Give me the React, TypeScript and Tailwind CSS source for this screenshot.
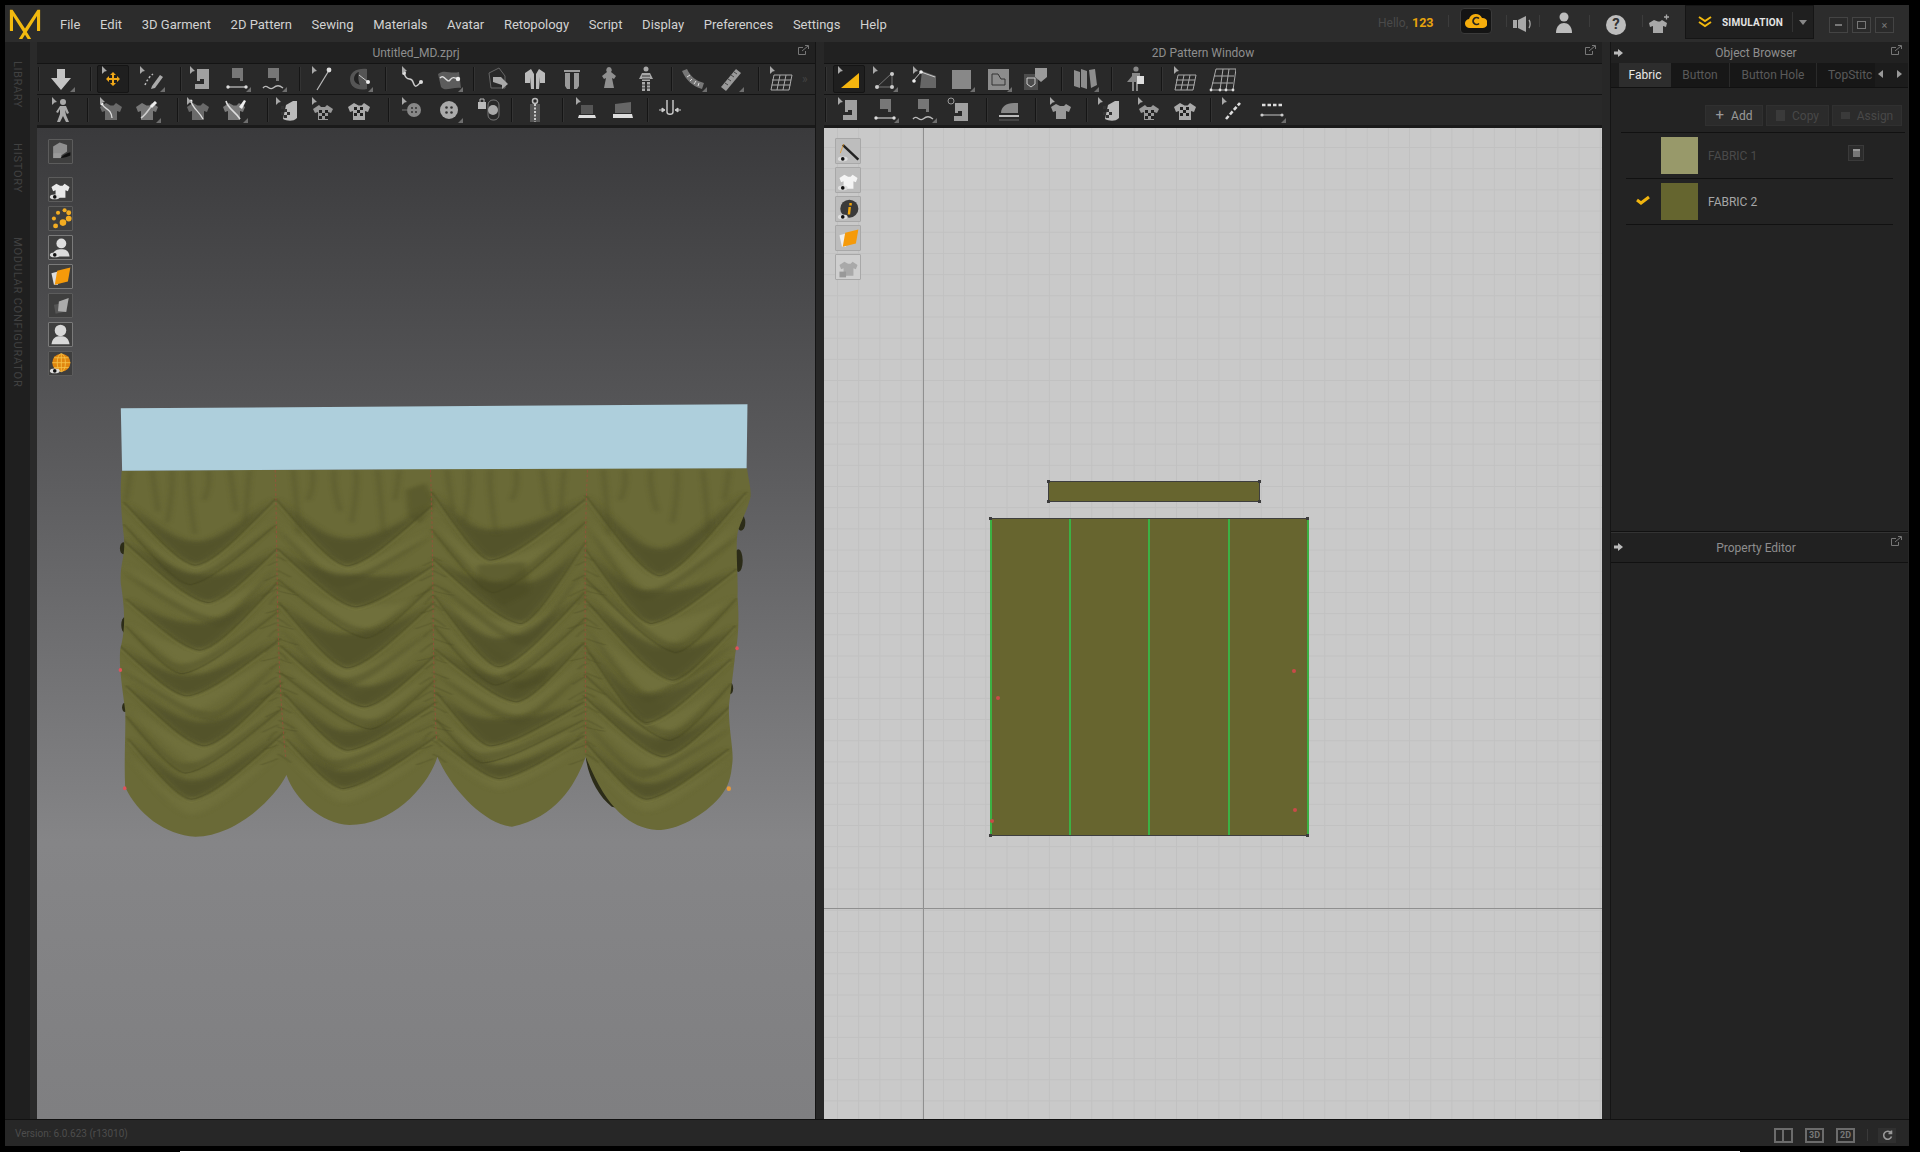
import React from "react";

const SHIRT = "M9 7 3 11l2 5 3-1v9h12v-9l3 1 2-5-6-4-2.5 2.5h-3z";
const Cur = () => <path d="M3 1v8l2.6-2.4L8 6z" fill="#a8a8a8" />;
const Tick = () => <path d="M28 27h-5l5-5z" fill="#6e6e6e" />;
const Chk = ({ x = 11, y = 14 }: { x?: number; y?: number }) => (
  <g fill="#222">
    <path d={`M${x} ${y}h3v3h-3zM${x + 6} ${y}h3v3h-3zM${x + 3} ${y + 3}h3v3h-3zM${x} ${y + 6}h3v3h-3zM${x + 6} ${y + 6}h3v3h-3z`} />
  </g>
);
const draw: Record<string, React.ReactNode> = {
  down: <path d="M10 4h8v9h6L14 25 4 13h6z" fill="#c4c4c4" />,
  move: (
    <path d="M14 7l3 3h-2v3h3v-2l3 3-3 3v-2h-3v3h2l-3 3-3-3h2v-3h-3v2l-3-3 3-3v2h3v-3h-2z" fill="#f0a818" />
  ),
  edit: <g><path d="M8 20c2-5 5-9 8-11" stroke="#bbb" strokeDasharray="2 2" fill="none" strokeWidth="1.5" /><path d="M15 21l8-11 3 2-8 11-4 1z" fill="#aaa" /></g>,
  sew: <path d="M10 4h12v20H8v-5h9v-5h-4v2h-3z" fill="#a0a0a0" />,
  sew2: <g><path d="M9 3h11v13h-3v-3H9z" fill="#777" /><path d="M5 22h18" stroke="#bbb" strokeWidth="1.3" /><circle cx="5" cy="22" r="1.7" fill="#ddd" /><circle cx="23" cy="22" r="1.7" fill="#ddd" /></g>,
  sew3: <g><path d="M9 3h11v13h-3v-3H9z" fill="#777" /><path d="M4 23c4-5 6 3 10 0s6-3 10 0" stroke="#bbb" strokeWidth="1.4" fill="none" /></g>,
  sew4: <g><circle cx="6" cy="5" r="3" fill="none" stroke="#999" /><path d="M10 7h13v18H9v-5h8v-5h-4v2h-3z" fill="#a0a0a0" /></g>,
  needle: <g><path d="M8 25 19 7" stroke="#bbb" strokeWidth="1.2" /><circle cx="20" cy="5" r="2.4" fill="#ddd" /></g>,
  ball: <g><path d="M5 14C5 7 12 3 22 4v20C12 26 5 22 5 14z" fill="#555" /><path d="M9 14c0-4 3-7 5-7-1 3-1 9 1 13-3-1-6-3-6-6z" fill="#222" /><path d="M14 10l9 7" stroke="#ccc" /><circle cx="23" cy="17" r="2" fill="#eee" /></g>,
  curve: <g><path d="M5 8c3 10 7 3 9 9s3 5 8 0" stroke="#ccc" strokeWidth="1.5" fill="none" /><circle cx="5" cy="8" r="2" fill="#ddd" /><circle cx="22" cy="17" r="2" fill="#ddd" /></g>,
  curve2: <g><path d="M3 9c6-5 12 0 21-2l2 16C17 22 10 27 6 22z" fill="#5c5c5c" /><path d="M5 13c4-5 7 6 10 2s5-2 8-1" stroke="#ddd" fill="none" strokeWidth="1.4" /><circle cx="23" cy="14" r="2.2" fill="#eee" /></g>,
  box: <g><path d="M5 8l10-5 6 8v12H7z" fill="none" stroke="#666" /><path d="M9 12h8l7 7-6 5v-4l-9-3z" fill="#aaa" /></g>,
  jacket: <path d="M10 4 4 8v10h5v-6l1 12h3V9zM18 4l6 4v10h-5v-6l-1 12h-3V9z" fill="#bbb" />,
  vest: <path d="M7 8h5v16H9l-2-3zM16 8h5v13l-2 3h-3zM6 5h16v2H6z" fill="#9a9a9a" />,
  dress: <path d="M14 2a3 3 0 0 1 2 5l5 4-2 3-2-1 2 10H9l2-10-2 1-2-3 5-4a3 3 0 0 1 2-5z" fill="#8f8f8f" />,
  armor: <g fill="#a8a8a8"><circle cx="14" cy="4" r="2.5" /><path d="M10 8h8l3 6h-3v2h-8v-2H7zM10 17h3v9h-3zM15 17h3v9h-3z" /><path d="M10 11h8M10 14h8M10 20h8M10 23h8" stroke="#333" /></g>,
  measure: <g><path d="M3 6c4 9 10 15 20 18l2-6C17 16 11 11 8 4z" fill="#777" /><path d="M8 12l3-2M11 16l2-2M15 19l2-3M19 21l1-3" stroke="#ddd" /></g>,
  ruler: <g><path d="M5 22 20 4l5 4-15 18z" fill="#999" /><path d="M9 18l3 2M12 14l3 2M15 10l3 2M18 7l3 2" stroke="#444" /></g>,
  grid: <g stroke="#aaa" fill="none"><path d="M7 10h18l-3 15H4zM13 10l-3 15M19 10l-3 15M5 15h19M4.6 20h18.8" /></g>,
  walk: <path d="M14 3a3 3 0 1 1 0 6 3 3 0 0 1 0-6zM11 10h6l3 7-2 1-2-4 1 5 3 7h-3l-3-6-3 6H8l3-8v-5l-2 4-2-1z" fill="#aaa" />,
  sc1: <g><path d={SHIRT} fill="#6a6a6a" /><path d="M5 8c3 6 9 4 10 14" stroke="#ddd" fill="none" strokeWidth="1.3" /><circle cx="5" cy="8" r="1.5" fill="#eee" /></g>,
  sc2: <g><path d={SHIRT} fill="#777" /><path d="M8 22C14 18 16 12 22 6" stroke="#ccc" fill="none" strokeWidth="1.6" /><path d="M17 10l5-5 2 2-5 5z" fill="#eee" /></g>,
  sc3: <g><path d={SHIRT} fill="#6a6a6a" /><path d="M7 5c2 8 8 10 12 18" stroke="#ddd" fill="none" strokeWidth="1.3" /><circle cx="7" cy="5" r="1.5" fill="#eee" /></g>,
  sc4: <g><path d={SHIRT} fill="#7b7b7b" /><path d="M6 5c2 8 9 10 14 18" stroke="#ddd" fill="none" strokeWidth="1.6" /><path d="M19 11l5-7 2 1-4 8z" fill="#eee" /></g>,
  stretch: <g><path d="M20 5h4v17c-4 4-10 3-14 1l3-14z" fill="#bbb" /><path d="M8 10h3v3H8zM11 13h3v3h-3zM8 16h3v3H8zM11 19h3v3h-3zM14 16h3v3h-3z" fill="#333" /></g>,
  chk: <g><path d="M10 9 4 13l2 4 3-1v8h10v-8l3 1 2-4-6-4-2 2h-4z" fill="#999" /><Chk x={10} y={14} /></g>,
  chk2: <g><path d={SHIRT} fill="#aaa" /><Chk x={9} y={11} /></g>,
  sh: <path d="M9 8 4 11l2 5 3-1v8h10v-8l3 1 2-5-5-3-2 2h-4z" fill="#999" />,
  b1: <g><path d="M3 14h5" stroke="#777" /><circle cx="15" cy="14" r="7" fill="#888" /><circle cx="13" cy="12" r="1" fill="#333" /><circle cx="17" cy="12" r="1" fill="#333" /><circle cx="13" cy="16" r="1" fill="#333" /><circle cx="17" cy="16" r="1" fill="#333" /></g>,
  b2: <g><circle cx="14" cy="14" r="9" fill="#aaa" /><circle cx="11.5" cy="11.5" r="1.3" fill="#333" /><circle cx="16.5" cy="11.5" r="1.3" fill="#333" /><circle cx="11.5" cy="16.5" r="1.3" fill="#333" /><circle cx="16.5" cy="16.5" r="1.3" fill="#333" /></g>,
  b3: <g><path d="M3 6h8v7H3z" fill="#bbb" /><path d="M5 6V3h4v3" stroke="#bbb" fill="none" /><rect x="13" y="4" width="11" height="20" rx="5" fill="none" stroke="#777" /><circle cx="18" cy="14" r="5" fill="#aaa" /></g>,
  zip: <g><path d="M9 8h10v18H9z" fill="#555" /><path d="M14 8v18" stroke="#ccc" strokeWidth="2" strokeDasharray="2 1.5" /><circle cx="14" cy="5" r="2.5" fill="none" stroke="#bbb" strokeWidth="1.5" /></g>,
  bind: <g><path d="M8 9h12v9H8z" fill="#555" /><path d="M6 19h16l1 3H5z" fill="#ddd" /></g>,
  bind2: <g><path d="M6 8l16-2v11H6z" fill="#666" /><path d="M4 18h19l1 4H4z" fill="#ddd" /></g>,
  pinch: <g stroke="#ccc" fill="#ccc"><path d="M11 4v12c0 3 6 3 6 0V4" fill="none" strokeWidth="1.4" /><path d="M3 14h5M25 14h-5" /><path d="M9 14l-3-2v4zM19 14l3-2v4z" /></g>,
  tri: <path d="M6 23 24 8v15z" fill="#f5b50f" />,
  line: <g><path d="M7 22h15V8z" fill="none" stroke="#777" /><circle cx="7" cy="22" r="2" fill="#ccc" /><circle cx="22" cy="22" r="2" fill="#ccc" /><circle cx="22" cy="9" r="2" fill="#ccc" /></g>,
  poly: <g><path d="M12 6l14 5v12H10z" fill="#666" /><path d="M3 16l8-9 14 5" stroke="#ccc" fill="none" /><circle cx="11" cy="7" r="1.8" fill="#eee" /><circle cx="4" cy="16" r="1.8" fill="#eee" /></g>,
  rect: <rect x="5" y="5" width="19" height="19" fill="#888" />,
  rect2: <g><rect x="4" y="4" width="21" height="21" fill="#8c8c8c" /><path d="M8 20V9h6l3 5h4v6z" fill="none" stroke="#333" /></g>,
  dart: <g><rect x="3" y="9" width="14" height="16" fill="#4d4d4d" /><path d="M6 13h8v6l-4 3-4-3z" fill="none" stroke="#ccc" /><path d="M14 3h12v9l-6 5-6-5z" fill="#9a9a9a" /></g>,
  fold: <path d="M3 5l6 2v16l-6-2zM10 4l6 2v18l-6-2zM18 5l6-1 2 16-6 3z" fill="#8d8d8d" />,
  avatar: <g><circle cx="13" cy="4" r="2.6" fill="#888" /><path d="M9 8h8v9h-2v9h-2v-9h-2v9H9v-9H4l5-6z" fill="#888" /><path d="M14 11h7v8h-7z" fill="#ddd" /></g>,
  grid2: <g stroke="#aaa" fill="none"><path d="M8 4h20l-3 21H3zM15 4l-3 21M21 4l-3 21M6 11h20M4 18h21" /><g fill="#ddd" stroke="none"><circle cx="3" cy="25" r="1.4" /><circle cx="12" cy="25" r="1.4" /><circle cx="18" cy="25" r="1.4" /><circle cx="25" cy="25" r="1.4" /></g></g>,
  iron: <g><path d="M5 17c0-6 5-10 13-10h4v10z" fill="#888" /><path d="M3 19h20v2H3z" fill="#bbb" /><path d="M3 23h20v2H3z" fill="#444" /></g>,
  seg: <path d="M7 23 21 7" stroke="#ddd" strokeWidth="2.6" strokeDasharray="4 2" />,
  dash: <g><path d="M4 9h20" stroke="#ddd" strokeWidth="2.4" strokeDasharray="3.5 2" /><path d="M4 19h20" stroke="#999" strokeWidth="1.4" /><circle cx="4" cy="19" r="1.6" fill="#ccc" /><circle cx="24" cy="19" r="1.6" fill="#ccc" /></g>,
};

const B = ({ k, c, t, cls }: { k: string; c?: boolean; t?: boolean; cls?: string }) => (
  <div className={`w-[36px] h-[28px] shrink-0 flex items-center justify-center ${cls ?? ""}`}>
    <svg width="28" height="28" viewBox="0 0 28 28">
      {draw[k]}
      {c && <Cur />}
      {t && <Tick />}
    </svg>
  </div>
);
const Sep = ({ cls }: { cls: string }) => <div className={`w-[2px] h-[24px] shrink-0 border-l border-[#151515] bg-[#333] ${cls}`} />;
const Act = ({ children }: { children: React.ReactNode }) => (
  <div className="w-[32px] h-[28px] shrink-0 flex items-center justify-center bg-[#1f1f1f] border border-[#151515] rounded-[2px]">{children}</div>
);

const Row = ({ children }: { children: React.ReactNode }) => (
  <div className="h-[31px] flex items-center bg-[#292929] border-t border-[#141414]">{children}</div>
);

const Title = ({ text, cls }: { text: string; cls: string }) => (
  <div className={`h-[21px] relative flex items-center justify-center bg-[#212121] text-[#8e8e8e] text-[12px] pt-[1px] ${cls}`}>
    {text}
    <Ext />
  </div>
);
const Ext = () => (
  <svg className="absolute right-[6px] top-[3px]" width="11" height="10" viewBox="0 0 11 10" fill="none" stroke="#777">
    <path d="M5 2.5H.5v7h7V6" />
    <path d="M4 6l6-5M7 .5h3.500V4" />
  </svg>
);
const Arrow = ({ cls }: { cls: string }) => (
  <svg className={`absolute left-[3px] ${cls}`} width="9" height="8" viewBox="0 0 9 8" fill="#bbb"><path d="M0 2.500h4V0l5 4-5 4V5.500H0z" /></svg>
);

const Tool3D = ({ children, on }: { children: React.ReactNode; on?: boolean }) => (
  <div className={`w-[25px] h-[25px] shrink-0 flex items-center justify-center rounded-[1px] border ${on ? "border-[#7a7a7a] bg-[#3f3f3f]" : "border-[#5c5c5c] bg-[#3e3e3e]"}`}>
    <svg width="23" height="23" viewBox="0 0 28 28">{children}</svg>
  </div>
);
const Eye = () => <g><ellipse cx="7" cy="23" rx="6" ry="3" fill="#ddd" /><circle cx="7" cy="23" r="2.2" fill="#111" /></g>;
const Tool2D = ({ children, dim }: { children: React.ReactNode; dim?: boolean }) => (
  <div className={`w-[26px] h-[26px] shrink-0 flex items-center justify-center rounded-[1px] border border-[#a8a8a8] ${dim ? "bg-[#cfcfcf]" : "bg-[#bdbdbd]"}`}>
    <svg width="23" height="23" viewBox="0 0 28 28">{children}</svg>
  </div>
);

type F = [number, number, number, number, number, number, number];
const cols: F[][] = [
  [[55, 330, 220, 520, 405, 320, 70], [50, 440, 250, 632, 408, 470, 80], [60, 620, 230, 775, 410, 570, 80], [45, 760, 200, 912, 415, 740, 60], [60, 880, 240, 1062, 420, 870, 70], [65, 1040, 210, 1222, 425, 1020, 55]],
  [[405, 320, 570, 522, 765, 340, 80], [410, 470, 590, 645, 768, 520, 95], [412, 630, 570, 828, 770, 630, 100], [416, 760, 610, 945, 772, 790, 60], [422, 900, 570, 1075, 775, 930, 55], [430, 1040, 560, 1190, 778, 1030, 50]],
  [[765, 300, 900, 505, 1120, 320, 90], [768, 500, 970, 695, 1120, 450, 120], [770, 610, 920, 825, 1118, 600, 85], [772, 770, 960, 930, 1116, 750, 60], [775, 900, 900, 1062, 1115, 930, 80], [780, 1040, 920, 1160, 1117, 1030, 40]],
  [[1120, 310, 1290, 552, 1490, 300, 80], [1118, 470, 1270, 695, 1468, 530, 95], [1118, 620, 1320, 865, 1465, 700, 95], [1117, 760, 1260, 992, 1455, 800, 80], [1115, 910, 1300, 1095, 1455, 940, 55], [1120, 1050, 1260, 1222, 1450, 1070, 45]],
];
const folds = cols.flat();
const mids: F[] = cols.flatMap((col) =>
  col.slice(0, -1).map((a, i) => {
    const b = col[i + 1];
    return [a[0], (a[1] + b[1]) / 2 + 18, (a[2] + b[2]) / 2 + (i % 2 ? 34 : -28), (a[3] + b[3]) / 2 + 8, a[4], (a[5] + b[5]) / 2 + 10, 30] as F;
  })
);
const low = ([a, b, c, d, e, f]: F, y = 0) =>
  `M${a} ${b + y}C${a + 0.45 * (c - a)} ${b + 0.55 * (d - b) + y} ${c - 0.22 * (c - a)} ${d - 0.04 * (d - b) + y} ${c} ${d + y}C${c + 0.22 * (e - c)} ${d - 0.04 * (d - f) + y} ${e - 0.45 * (e - c)} ${f + 0.55 * (d - f) + y} ${e} ${f + y}`;
const crescent = (p: F, y = 0) => {
  const [a, b, c, d, e, f, t] = p;
  return `${low(p, y)}C${e - 0.5 * (e - c)} ${f + 0.42 * (d - f) + y} ${c + 0.25 * (e - c)} ${d - t + y} ${c} ${d - t + y}C${c - 0.25 * (c - a)} ${d - t + y} ${a + 0.5 * (c - a)} ${b + 0.42 * (d - b) + y} ${a} ${b + y}Z`;
};
const OUT =
  "M50 242L405 240 700 238C720 228 740 228 760 238L1100 234 1492 235C1495 270 1505 310 1498 330C1490 370 1475 400 1470 430C1465 470 1472 560 1470 620C1475 700 1470 760 1465 790C1460 850 1455 900 1450 950C1450 1030 1462 1080 1458 1120C1455 1160 1450 1190 1430 1220C1390 1280 1330 1320 1285 1320C1220 1315 1165 1250 1120 1100C1100 1170 1060 1280 950 1310C890 1305 810 1200 778 1100C760 1180 680 1305 575 1305C510 1300 450 1230 430 1155C400 1230 310 1340 220 1340C150 1335 85 1270 58 1190C55 1100 60 1020 58 960C50 880 40 800 50 760C60 700 55 640 48 580C45 520 60 500 55 440C50 380 45 320 50 242Z";
const seams = [410, 768, 1120];
const ys = Array.from({ length: 18 }, (_, i) => 500 + i * 34 + (i % 3) * 7);

const Curtain = () => (
  <svg className="absolute left-[63px] top-[262px]" width="680" height="480" viewBox="0 0 1568 1440" preserveAspectRatio="none">
    <defs>
      <clipPath id="cl"><path d={OUT} /></clipPath>
      <filter id="bl" x="-10%" y="-10%" width="120%" height="120%"><feGaussianBlur stdDeviation="10 7" /></filter>
      <filter id="bm" x="-10%" y="-10%" width="120%" height="120%"><feGaussianBlur stdDeviation="6 4" /></filter>
      <filter id="bs" x="-10%" y="-10%" width="120%" height="120%"><feGaussianBlur stdDeviation="3 2" /></filter>
    </defs>
    <g fill="#2c2c18">
      <ellipse cx="1478" cy="398" rx="10" ry="24" /><ellipse cx="1472" cy="512" rx="10" ry="34" /><ellipse cx="54" cy="475" rx="8" ry="18" /><ellipse cx="58" cy="705" rx="9" ry="24" /><ellipse cx="1453" cy="895" rx="7" ry="18" /><ellipse cx="58" cy="952" rx="7" ry="14" />
      <path d="M1120 1100C1150 1140 1170 1190 1215 1260L1180 1250C1150 1220 1125 1160 1120 1100Z" />
    </g>
    <path d={OUT} fill="#6a6a37" />
    <g clipPath="url(#cl)">
      <g filter="url(#bl)" fill="#74743f" opacity=".6">
        {folds.map((f, i) => <path key={i} d={crescent(f, f[6] * 0.95)} />)}
      </g>
      <g filter="url(#bm)" fill="#55552b" opacity=".55">
        {mids.map((f, i) => <path key={i} d={crescent(f)} />)}
      </g>
      <g filter="url(#bl)" fill="#4c4c26" opacity=".72">
        {folds.map((f, i) => <path key={i} d={crescent(f, 4)} />)}
      </g>
      <g filter="url(#bs)" stroke="#42421f" strokeWidth="3" fill="none" opacity=".5">
        {folds.map((f, i) => <path key={i} d={low(f, 6)} />)}
        {mids.filter((_, i) => i % 2 === 0).map((f, i) => <path key={i} d={low(f)} />)}
      </g>
      <g filter="url(#bs)" stroke="#7a7a43" strokeWidth="4" fill="none" opacity=".4">
        {folds.map((f, i) => <path key={i} d={low(f, 16)} />)}
      </g>
      <g filter="url(#bm)" stroke="#4f4f28" strokeWidth="8" fill="none" opacity=".5">
        {[70, 120, 165, 205, 250, 300, 345, 445, 490, 540, 590, 640, 690, 800, 850, 900, 960, 1020, 1070, 1160, 1210, 1270, 1330, 1390, 1450].map((x, i) => (
          <path key={x} d={`M${x} 240q${i % 3 ? 5 : -4} 50 ${i % 2 ? 14 : -10} ${90 + (i % 4) * 34}`} />
        ))}
      </g>
      <g filter="url(#bs)" stroke="#4c4c26" strokeWidth="3" fill="none" opacity=".42">
        {seams.flatMap((s) =>
          ys.map((y, i) => (
            <g key={`${s}-${y}`}>
              <path d={`M${s + (i % 5) - 2} ${y}q12 7 ${22 + (i % 4) * 8} ${14 + (i % 3) * 6}`} />
              <path d={`M${s + (i % 5) - 2} ${y + 14}q-12 7 -${20 + (i % 3) * 9} ${13 + (i % 4) * 5}`} />
            </g>
          ))
        )}
      </g>
      <g filter="url(#bm)" fill="#4a4a24" opacity=".42">
        <path d="M870 525l110-8 10 90-60 40-60-60z" />
        <path d="M705 300l45-20 20 50-30 70-30-20z" />
        <path d="M935 850l105-20-20 50-60 20z" />
      </g>
    </g>
    <g stroke="#a8483c" strokeWidth="1.6" strokeDasharray="8 6" fill="none">
      <path d="M404 240C410 500 405 800 428 1100" />
      <path d="M762 240C770 500 765 800 776 1050" />
      <path d="M1124 240C1115 500 1120 800 1120 1090" />
    </g>
    <path d="M48 55 1493 43 1491 235 730 238 51 242Z" fill="#aecfdc" />
    <g fill="#e0525a">
      <ellipse cx="47" cy="840" rx="4" ry="6" /><ellipse cx="1469" cy="775" rx="4" ry="6" /><ellipse cx="57" cy="1195" rx="4" ry="6" />
    </g>
    <ellipse cx="1450" cy="1196" rx="5" ry="7" fill="#e89a3a" />
  </svg>
);

const Pt = ({ cls }: { cls: string }) => <div className={`absolute w-[3px] h-[3px] bg-[#3c3c3c] ${cls}`} />;
const Red = ({ cls }: { cls: string }) => <div className={`absolute w-[4px] h-[4px] rounded-full bg-[#c94a48] ${cls}`} />;
const Seam = ({ cls }: { cls: string }) => <div className={`absolute top-0 bottom-0 w-[2px] bg-[#3cb043] ${cls}`} />;
const VSep = ({ cls }: { cls: string }) => <div className={`w-px h-[12px] bg-[#3c3c3c] -mt-[6px] ${cls}`} />;

export default function App() {
  const menu = ["File", "Edit", "3D Garment", "2D Pattern", "Sewing", "Materials", "Avatar", "Retopology", "Script", "Display", "Preferences", "Settings", "Help"];
  return (
    <div className="w-[1920px] h-[1152px] bg-black overflow-hidden relative font-['Roboto','Liberation_Sans',sans-serif] pt-[5px] pl-[5px] pr-[11px]">
      <div className="h-[1141px] flex flex-col bg-[#272727]">
        {/* menu */}
        <div className="h-[37px] shrink-0 bg-[#2c2c2c] flex items-center relative">
          <svg className="absolute left-[3px] top-[3px]" width="34" height="32" viewBox="0 0 38 36" fill="#f2b90f">
            <path d="M2 2h3l14 21L33 2h3v24h-3.500V9L21 27l5 8h-4l-3-5-3 5h-4l5-8L5.500 9v17H2z" />
          </svg>
          <div className="flex items-center gap-[19.7px] ml-[55px] text-[13px] text-[#d2d2d2] mt-[3px]">
            {menu.map((m) => <span key={m}>{m}</span>)}
          </div>
          <div className="ml-auto flex items-center h-full mr-[15px]">
            <span className="text-[12px] text-[#4a4a4a] mr-[4px] -mt-[1px]">Hello,</span>
            <span className="text-[12.5px] font-bold text-[#e8a40c] w-[36px] -mt-[1px]">123</span>
            <VSep cls="mr-[11px]" />
            <div className="w-[32px] h-[26px] rounded-[4px] bg-[#141414] border border-[#3a3a3a] flex items-center justify-center mr-[14px] -mt-[6px]">
              <svg width="22" height="16" viewBox="0 0 22 16">
                <path d="M5 15a4.500 4.500 0 0 1-1-9 7 7 0 0 1 13-1 5 5 0 0 1 1 10z" fill="#f5ad0c" />
                <path d="M14 5.500a3.500 3.500 0 1 0 0 5" fill="none" stroke="#222" strokeWidth="1.700" />
              </svg>
            </div>
            <VSep cls="" />
            <svg className="mx-[5px]" width="22" height="18" viewBox="0 0 22 18" fill="#a8a8a8">
              <path d="M1 5h4v8H1zM6 5l8-4v16l-8-4z" /><path d="M17 5c1.500 2 1.500 6 0 8" stroke="#a8a8a8" fill="none" strokeWidth="1.300" />
            </svg>
            <VSep cls="mr-[15px]" />
            <svg width="18" height="22" viewBox="0 0 18 22" fill="#bcbcbc" className="-mt-[2px]">
              <circle cx="9" cy="5" r="4.500" /><path d="M1 21c0-7 4-10 8-10s8 3 8 10z" />
            </svg>
            <VSep cls="ml-[16px] mr-[16px]" />
            <div className="w-[20px] h-[20px] rounded-full bg-[#bdbdbd] text-[#333] text-[15px] font-bold flex items-center justify-center mt-[2px]">?</div>
            <VSep cls="ml-[16px] mr-[5px]" />
            <svg width="22" height="20" viewBox="0 0 22 20" fill="#a8a8a8" className="mr-[15px]">
              <path d="M6 6 1 9l1 4 3-1v7h10v-7l3 1 1-4-5-3-2 1.500h-2z" /><path d="M16 3h5M18.500 .5v5" stroke="#a8a8a8" strokeWidth="1.300" />
            </svg>
            <div className="w-[129px] h-[34px] -mt-[3px] flex items-center bg-[#1f1f1f] border border-[#151515] mr-[15px]">
              <svg className="ml-[12px] mr-[10px]" width="14" height="14" viewBox="0 0 14 14" fill="none" stroke="#f2b90f" strokeWidth="2"><path d="M1 2l6 4 6-4M1 7l6 4 6-4" /></svg>
              <span className="text-[10px] font-bold text-[#e4e4e4] tracking-[.2px]">SIMULATION</span>
              <div className="ml-auto w-[21px] h-[20px] border-l border-[#333] flex items-center justify-center">
                <div className="w-0 h-0 border-x-[4px] border-x-transparent border-t-[5px] border-t-[#888]" />
              </div>
            </div>
            <div className="flex gap-[4px] mt-[3px]">
              <div className="w-[19px] h-[16px] bg-[#2a2a2a] border border-[#444] flex items-center justify-center"><div className="w-[7px] h-[2px] bg-[#777]" /></div>
              <div className="w-[19px] h-[16px] bg-[#2a2a2a] border border-[#444] flex items-center justify-center"><div className="w-[9px] h-[8px] border border-[#777]" /></div>
              <div className="w-[19px] h-[16px] bg-[#2a2a2a] border border-[#444] flex items-center justify-center text-[#777] text-[11px] leading-none">×</div>
            </div>
          </div>
        </div>

        {/* main */}
        <div className="flex-1 flex min-h-0">
          {/* rail */}
          <div className="w-[32px] shrink-0 flex bg-[#2a2a2a]">
            <div className="w-[25px] bg-[#1f1f1f] flex flex-col items-center text-[#414141] text-[11px] leading-none">
              <span className="[writing-mode:vertical-rl] mt-[19px] tracking-[.6px]">LIBRARY</span>
              <span className="[writing-mode:vertical-rl] mt-[35px] tracking-[.8px]">HISTORY</span>
              <span className="[writing-mode:vertical-rl] mt-[44px] tracking-[.8px]">MODULAR CONFIGURATOR</span>
            </div>
          </div>

          {/* 3D */}
          <div className="w-[778px] shrink-0 flex flex-col">
            <Title text="Untitled_MD.zprj" cls="pr-[20px]" />
            <Row>
              <Sep cls="ml-px mr-[3px]" />
              <B k="down" t />
              <Sep cls="ml-[11px] mr-[5px]" />
              <Act><svg width="28" height="28" viewBox="0 0 28 28">{draw.move}<Cur /></svg></Act>
              <B k="edit" c t cls="ml-[4px]" />
              <Sep cls="ml-[11px] mr-px" />
              <B k="sew" c /><B k="sew2" t /><B k="sew3" t />
              <Sep cls="ml-[8px] mr-[4px]" />
              <B k="needle" c /><B k="ball" t />
              <Sep cls="ml-[8px] mr-[8px]" />
              <B k="curve" c /><B k="curve2" t />
              <Sep cls="ml-[6px] mr-[5px]" />
              <B k="box" /><B k="jacket" cls="ml-px" /><B k="vest" cls="ml-px" /><B k="dress" cls="ml-px" /><B k="armor" cls="ml-px" />
              <Sep cls="ml-[7px] mr-[2px]" />
              <B k="measure" t /><B k="ruler" t cls="ml-px" />
              <Sep cls="ml-[10px] mr-[3px]" />
              <B k="grid" c />
              <span className="text-[#444] text-[12px] ml-[3px]">»</span>
            </Row>
            <Row>
              <Sep cls="ml-px mr-[5px]" />
              <B k="walk" c />
              <Sep cls="ml-[6px] mr-[4px]" />
              <B k="sc1" c /><B k="sc2" t />
              <Sep cls="ml-[12px] mr-[1px]" />
              <B k="sc3" c /><B k="sc4" t />
              <Sep cls="ml-[15px]" />
              <B k="stretch" c />
              <B k="chk" c /><B k="chk2" />
              <Sep cls="ml-[11px] mr-[5px]" />
              <B k="b1" c /><B k="b2" t /><B k="b3" cls="ml-[4px]" />
              <Sep cls="ml-[4px] mr-[4px]" />
              <B k="zip" />
              <Sep cls="ml-[9px] mr-[5px]" />
              <B k="bind" c /><B k="bind2" />
              <Sep cls="ml-[6px] mr-[3px]" />
              <B k="pinch" />
            </Row>
            <div className="h-[3px] bg-[#1a1a1a]" />
            <div className="flex-1 relative bg-[linear-gradient(180deg,#3a3a3c_0%,#5a5a5c_33%,#858587_72%,#7f7f81_100%)] overflow-hidden">
              <div className="absolute left-[11px] top-[11px] flex flex-col gap-[4px]">
                <div className="mb-[9px]">
                  <Tool3D><path d="M5 16V8l8-5 9 3v8l-9 6z" fill="#8f8f8f" /><path d="M5 16h10v6H5z" fill="#9a9a9a" /><path d="M14 22c4-4 8-6 12-7v4c-4 2-8 3-12 3z" fill="#111" /></Tool3D>
                </div>
                <Tool3D><path d={SHIRT} fill="#e8e8e8" /><Eye /></Tool3D>
                <Tool3D>
                  <g fill="#f3ad22"><circle cx="19" cy="4" r="2.500" /><circle cx="24" cy="7" r="3" /><circle cx="24" cy="14" r="3.500" /><circle cx="17" cy="19" r="4" /><circle cx="8" cy="23" r="3" /><circle cx="6" cy="14" r="2.500" /><circle cx="11" cy="7" r="2.500" /></g>
                </Tool3D>
                <Tool3D on><circle cx="15" cy="9" r="6" fill="#ddd" /><path d="M4 25c1-8 6-9 11-9s9 1 10 9z" fill="#ddd" /><Eye /></Tool3D>
                <Tool3D on><path d="M3 10l8-2v16H6z" fill="#ddd" /><path d="M10 7l16-4-3 17-16 4z" fill="#f59a0a" /></Tool3D>
                <Tool3D><path d="M6 13l12-2v11l-10 2z" fill="#555" /><path d="M12 9l12-4-3 17-10-1z" fill="#aaa" /></Tool3D>
                <Tool3D on><circle cx="14" cy="9" r="7" fill="#d8d8d8" /><path d="M3 26c1-8 5-10 11-10s10 2 11 10z" fill="#d8d8d8" /></Tool3D>
                <Tool3D><circle cx="15" cy="13" r="11" fill="#e0860f" /><g stroke="#f7c34a" fill="none"><ellipse cx="15" cy="13" rx="5" ry="11" /><path d="M4 13h22M6 7h18M6 19h18M15 2v22" /></g><Eye /></Tool3D>
              </div>
              <Curtain />
            </div>
          </div>

          <div className="w-[9px] shrink-0 bg-[#272727] border-l border-[#151515]" />

          {/* 2D */}
          <div className="w-[778px] shrink-0 flex flex-col">
            <Title text="2D Pattern Window" cls="pr-[20px]" />
            <Row>
              <Sep cls="ml-px mr-[6px]" />
              <Act><svg width="28" height="28" viewBox="0 0 28 28">{draw.tri}<Cur /></svg></Act>
              <B k="line" c t cls="ml-px" />
              <B k="poly" c cls="ml-[4px]" />
              <B k="rect" t cls="ml-px" />
              <B k="rect2" t cls="ml-px" />
              <B k="dart" cls="ml-px" />
              <Sep cls="ml-[8px] mr-[4px]" />
              <B k="fold" t />
              <Sep cls="ml-[8px] mr-[6px]" />
              <B k="avatar" />
              <Sep cls="ml-[6px] mr-[4px]" />
              <B k="grid" c /><B k="grid2" cls="ml-px" />
            </Row>
            <Row>
              <Sep cls="ml-px mr-[4px]" />
              <B k="sew" c /><B k="sew2" t /><B k="sew3" t cls="ml-[2px]" /><B k="sew4" />
              <Sep cls="ml-[9px] mr-[4px]" />
              <B k="iron" />
              <Sep cls="ml-[7px] mr-[6px]" />
              <B k="sh" c />
              <Sep cls="ml-[7px] mr-[3px]" />
              <B k="stretch" c /><B k="chk" c cls="ml-[4px]" /><B k="chk2" />
              <Sep cls="ml-[7px] mr-[3px]" />
              <B k="seg" c /><B k="dash" t cls="ml-[3px]" />
            </Row>
            <div className="h-[3px] bg-[#1a1a1a]" />
            <div className="flex-1 relative overflow-hidden bg-[#c9c9c9] bg-[linear-gradient(#c1c1c1_1px,transparent_1px),linear-gradient(90deg,#c1c1c1_1px,transparent_1px)] bg-[size:21.2px_21.2px] bg-[position:13px_19px]">
              <div className="absolute top-0 bottom-0 left-[99px] w-px bg-[#8f8f8f]" />
              <div className="absolute left-0 right-0 top-[780px] h-px bg-[#8f8f8f]" />
              <div className="absolute left-[11px] top-[10px] flex flex-col gap-[3px]">
                <Tool2D><path d="M7 6 26 24" stroke="#222" strokeWidth="3" /><path d="M8 5 4 16" stroke="#e39a2c" /><Eye /></Tool2D>
                <Tool2D><path d={SHIRT} fill="#f4f4f4" /><Eye /></Tool2D>
                <Tool2D><circle cx="15" cy="13" r="11" fill="#3a3a3a" /><path d="M14 11h3l-1 9h-3zM15 6h3v3h-3z" fill="#f2a60c" /><Eye /></Tool2D>
                <Tool2D><path d="M3 10l8-2v16H6z" fill="#eee" /><path d="M10 7l16-4-3 17-16 4z" fill="#f59a0a" /></Tool2D>
                <Tool2D dim><path d={SHIRT} fill="#a9a9a9" /><path d="M3 19h8v7H3z" fill="#999" /></Tool2D>
              </div>
              {/* band */}
              <div className="absolute left-[224px] top-[353px] w-[212px] h-[21px] bg-[#67652f] border border-[#3e3e3e]">
                <Pt cls="-left-[2px] -top-[2px]" /><Pt cls="-right-[2px] -top-[2px]" /><Pt cls="-left-[2px] -bottom-[2px]" /><Pt cls="-right-[2px] -bottom-[2px]" />
              </div>
              {/* panel */}
              <div className="absolute left-[166px] top-[390px] w-[318px] h-[318px] bg-[#67652f] border-y border-[#3e3e3e]">
                <Seam cls="left-0" /><Seam cls="left-[79px]" /><Seam cls="left-[158px]" /><Seam cls="left-[238px]" /><Seam cls="left-[317px]" />
                <Pt cls="-left-[1px] -top-[2px]" /><Pt cls="left-[316px] -top-[2px]" /><Pt cls="-left-[1px] -bottom-[2px]" /><Pt cls="left-[316px] -bottom-[2px]" />
                <Red cls="left-[6px] top-[177px]" /><Red cls="left-[302px] top-[150px]" /><Red cls="left-[303px] top-[289px]" /><Red cls="left-0 top-[300px]" />
              </div>
            </div>
          </div>

          <div className="w-[8px] shrink-0 bg-[#272727]" />

          {/* right */}
          <div className="w-[298px] shrink-0 flex flex-col bg-[#232323] border-l border-[#151515]">
            <div className="h-[21px] relative flex items-center justify-center bg-[#212121] text-[#8e8e8e] text-[12px] pt-[1px] pr-[7px]">
              <Arrow cls="top-[7px]" />
              Object Browser
              <Ext />
            </div>
            <div className="h-[25px] flex items-end bg-[#1c1c1c] border-b border-[#111] relative text-[12px] pl-[8px]">
              <div className="w-[52px] h-[24px] flex items-center justify-center bg-[#2d2d2d] text-[#e8e8e8]">Fabric</div>
              <div className="w-[59px] h-[24px] flex items-center justify-center bg-[#171717] text-[#5a5a5a] border-r border-[#2a2a2a]">Button</div>
              <div className="w-[87px] h-[24px] flex items-center justify-center bg-[#171717] text-[#5a5a5a] border-r border-[#2a2a2a]">Button Hole</div>
              <div className="w-[58px] h-[24px] flex items-center pl-[11px] bg-[#171717] text-[#5a5a5a] whitespace-nowrap">TopStitc</div>
              <div className="absolute left-[267px] top-[7px] w-0 h-0 border-y-[4px] border-y-transparent border-r-[5px] border-r-[#999]" />
              <div className="absolute left-[286px] top-[7px] w-0 h-0 border-y-[4px] border-y-transparent border-l-[5px] border-l-[#999]" />
            </div>
            <div className="h-[45px] flex items-start justify-end gap-[3px] pr-[3px] text-[12px] border-b border-[#111] mx-[10px] mr-[3px] pt-[17px]">
              <div className="w-[58px] h-[21px] bg-[#2b2b2b] border border-[#303030] text-[#9a9a9a] flex items-center justify-center gap-[7px]"><span className="text-[15px] leading-none">+</span>Add</div>
              <div className="w-[63px] h-[21px] bg-[#2b2b2b] border border-[#303030] text-[#484848] flex items-center justify-center gap-[7px]"><span className="w-[9px] h-[11px] bg-[#3a3a3a]" />Copy</div>
              <div className="w-[70px] h-[21px] bg-[#2b2b2b] border border-[#303030] text-[#484848] flex items-center justify-center gap-[7px]"><span className="w-[9px] h-[7px] bg-[#3a3a3a]" />Assign</div>
            </div>
            <div className="h-[46px] flex items-center mx-[15px] border-b border-[#111] relative">
              <div className="w-[37px] h-[37px] bg-[#98996a] ml-[35px] mr-[10px]" />
              <span className="text-[12px] text-[#4a4a4a]">FABRIC 1</span>
              <div className="absolute left-[222px] top-[12px] w-[16px] h-[16px] bg-[#2c2c2c] border border-[#3a3a3a] flex items-center justify-center">
                <div className="w-[7px] h-[8px] bg-[#777] border-t-2 border-[#999]" />
              </div>
            </div>
            <div className="h-[46px] flex items-center mx-[15px] border-b border-[#111] relative">
              <svg className="absolute left-[10px] top-[16px]" width="14" height="11" viewBox="0 0 14 11" fill="none" stroke="#f0b40f" strokeWidth="3"><path d="M1 5l4 3 8-6" /></svg>
              <div className="w-[37px] h-[37px] bg-[#65652f] ml-[35px] mr-[10px]" />
              <span className="text-[12px] text-[#a6a6a6]">FABRIC 2</span>
            </div>
            <div className="h-[306px] shrink-0" />
            <div className="h-px bg-[#111]" />
            <div className="h-[30px] relative flex items-center justify-center bg-[#212121] text-[#8e8e8e] text-[12px] border-t border-[#333] pr-[7px]">
              <Arrow cls="top-[10px]" />
              Property Editor
              <Ext />
            </div>
            <div className="flex-1 border-t border-[#111]" />
          </div>
        </div>

        {/* status */}
        <div className="h-[27px] shrink-0 flex items-center bg-[#272727] border-t border-[#111] pl-[10px] pr-[13px]">
          <span className="text-[10px] text-[#4d4d4d]">Version: 6.0.623 (r13010)</span>
          <div className="ml-auto flex items-center mt-[4px]">
            <div className="w-[19px] h-[15px] border-2 border-[#6c6c6c] flex"><div className="w-1/2 border-r-2 border-[#6c6c6c]" /></div>
            <div className="w-[19px] h-[15px] border-2 border-[#6c6c6c] ml-[12px] text-[#777] text-[9px] font-bold flex items-center justify-center leading-none">3D</div>
            <div className="w-[19px] h-[15px] border-2 border-[#6c6c6c] ml-[12px] text-[#777] text-[9px] font-bold flex items-center justify-center leading-none">2D</div>
            <div className="w-px h-[12px] bg-[#3a3a3a] ml-[12px]" />
            <div className="w-[18px] h-[15px] ml-[10px] bg-[#303030] flex items-center justify-center">
              <svg width="11" height="11" viewBox="0 0 11 11" fill="none" stroke="#999" strokeWidth="1.600"><path d="M9 3a4 4 0 1 0 .500 3.500M9.500 .5V3.500H6.500" /></svg>
            </div>
          </div>
        </div>
      </div>
      <div className="absolute left-[180px] top-[1151px] w-[1560px] h-[1px] bg-white" />
    </div>
  );
}
